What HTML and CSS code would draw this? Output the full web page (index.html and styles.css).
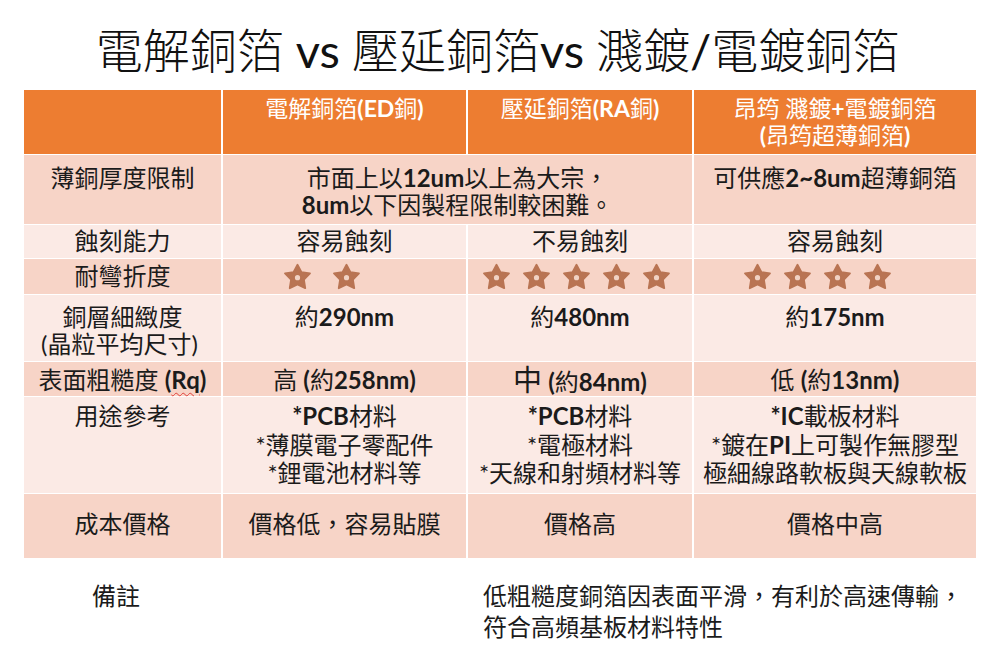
FILE: index.html
```html
<!DOCTYPE html>
<html lang="zh-Hant">
<head>
<meta charset="utf-8">
<title>電解銅箔 vs 壓延銅箔 vs 濺鍍/電鍍銅箔</title>
<link rel="stylesheet" href="styles.css">
</head>
<body>
<svg class="defs" width="0" height="0" aria-hidden="true">
  <symbol id="star" viewBox="0 0 24 24">
    <polygon points="12,1.6 15.53,8.15 23.1,9.3 17.71,14.85 18.9,22.4 12,19 5.1,22.4 6.29,14.85 0.9,9.3 8.47,8.15" fill="#B97453" stroke="#B97453" stroke-width="1.6" stroke-linejoin="round"/>
    <circle cx="12" cy="13" r="2.3" fill="#F1D2C4"/>
  </symbol>
</svg>

<h1 class="title">電解銅箔<span class="lat"> vs </span>壓延銅箔<span class="lat">vs </span>濺鍍<span class="lat">/</span>電鍍銅箔</h1>

<div class="table">
  <div class="row head">
    <div class="cell"></div>
    <div class="cell">電解銅箔<b>(ED</b>銅<b>)</b></div>
    <div class="cell">壓延銅箔<b>(RA</b>銅<b>)</b></div>
    <div class="cell">昂筠 濺鍍<b>+</b>電鍍銅箔<br><b>(</b>昂筠超薄銅箔<b>)</b></div>
  </div>

  <div class="row dark r1">
    <div class="cell">薄銅厚度限制</div>
    <div class="cell span2">市面上以<b>12um</b>以上為大宗，<br><b>8um</b>以下因製程限制較困難。</div>
    <div class="cell">可供應<b>2~8um</b>超薄銅箔</div>
  </div>

  <div class="row light r2">
    <div class="cell">蝕刻能力</div>
    <div class="cell">容易蝕刻</div>
    <div class="cell">不易蝕刻</div>
    <div class="cell">容易蝕刻</div>
  </div>

  <div class="row dark r3">
    <div class="cell label">耐彎折度</div>
    <div class="cell stars s2">
      <svg class="star"><use href="#star"/></svg>
      <svg class="star"><use href="#star"/></svg>
    </div>
    <div class="cell stars s5">
      <svg class="star"><use href="#star"/></svg>
      <svg class="star"><use href="#star"/></svg>
      <svg class="star"><use href="#star"/></svg>
      <svg class="star"><use href="#star"/></svg>
      <svg class="star"><use href="#star"/></svg>
    </div>
    <div class="cell stars s4">
      <svg class="star"><use href="#star"/></svg>
      <svg class="star"><use href="#star"/></svg>
      <svg class="star"><use href="#star"/></svg>
      <svg class="star"><use href="#star"/></svg>
    </div>
  </div>

  <div class="row light r4">
    <div class="cell">銅層細緻度<br>(晶粒平均尺寸)&nbsp;</div>
    <div class="cell">約<b>290nm</b></div>
    <div class="cell">約<b>480nm</b></div>
    <div class="cell">約<b>175nm</b></div>
  </div>

  <div class="row dark r5">
    <div class="cell">表面粗糙度 <b>(<span class="spell">Rq</span>)</b></div>
    <div class="cell">高 <b>(</b>約<b>258nm)</b></div>
    <div class="cell"><span class="big">中</span> <b>(</b>約<b>84nm)</b></div>
    <div class="cell">低 <b>(</b>約<b>13nm)</b></div>
  </div>

  <div class="row light r6">
    <div class="cell">用途參考</div>
    <div class="cell"><b>*PCB</b>材料<br>*薄膜電子零配件<br>*鋰電池材料等</div>
    <div class="cell"><b>*PCB</b>材料<br>*電極材料<br>*天線和射頻材料等</div>
    <div class="cell"><b>*IC</b>載板材料<br>*鍍在<b>PI</b>上可製作無膠型<br>極細線路軟板與天線軟板</div>
  </div>

  <div class="row dark r7">
    <div class="cell">成本價格</div>
    <div class="cell">價格低，容易貼膜</div>
    <div class="cell">價格高</div>
    <div class="cell">價格中高</div>
  </div>
</div>

<div class="notes">
  <div class="note-label">備註</div>
  <div class="note-text">低粗糙度銅箔因表面平滑，有利於高速傳輸，<br>符合高頻基板材料特性</div>
</div>
</body>
</html>
```

FILE: styles.css
```css
html, body {
  margin: 0;
  padding: 0;
  background: #ffffff;
}

body {
  width: 995px;
  height: 653px;
  overflow: hidden;
  font-family: Lato, "Noto Sans CJK TC", sans-serif;
  color: #1b1b1b;
}

.defs {
  position: absolute;
  width: 0;
  height: 0;
}

.title {
  margin: 0;
  height: 90px;
  box-sizing: border-box;
  padding-top: 10px;
  line-height: 80px;
  font-size: 47px;
  font-weight: 300;
  text-align: center;
  white-space: nowrap;
  color: #111;
}

.title .lat {
  font-family: Lato, sans-serif;
  font-weight: 400;
  white-space: pre;
}

.table {
  display: grid;
  grid-template-columns: 197px 243px 224px 282px;
  grid-template-rows: 64px 69px 33px 35px 66px 34px 96px 64px;
  column-gap: 2px;
  row-gap: 1px;
  width: 952px;
  margin-left: 24px;
  background: #ffffff;
}

.row {
  display: contents;
}

.cell {
  text-align: center;
  white-space: nowrap;
  font-size: 24px;
  line-height: 28px;
  box-sizing: border-box;
}

.cell b {
  font-family: Lato, sans-serif;
  font-weight: 700;
}

.span2 {
  grid-column: span 2;
}

.head .cell {
  background: #ED7D31;
  color: #ffffff;
  font-size: 23px;
  line-height: 27px;
  padding-top: 5px;
}

.dark .cell {
  background: #F7D4C7;
}

.light .cell {
  background: #FBEAE5;
}

.r1 .cell {
  line-height: 27px;
  padding-top: 9px;
}

.r2 .cell {
  padding-top: 2px;
}

.r3 .label {
  padding-top: 3px;
}

.stars {
  display: flex;
  align-items: center;
}

.s2 {
  padding-left: 61px;
  gap: 22px;
}

.s5 {
  padding-left: 15px;
  gap: 13px;
}

.s4 {
  padding-left: 50px;
  gap: 13px;
}

.star {
  width: 27px;
  height: 27px;
  flex: none;
}

.r4 .cell {
  line-height: 27px;
  padding-top: 8px;
}

.r5 .cell {
  padding-top: 4px;
}

.big {
  font-size: 29px;
}

.spell {
  text-decoration: underline wavy #e0403a;
  text-decoration-thickness: 1px;
  text-underline-offset: 3px;
}

.r6 .cell {
  line-height: 28.5px;
  padding-top: 5px;
}

.r7 .cell {
  padding-top: 16px;
}

.notes {
  display: flex;
  margin-top: 22px;
  padding-left: 92px;
  font-size: 24px;
  line-height: 31px;
  white-space: nowrap;
}

.note-label {
  width: 391px;
  flex: none;
}
```
